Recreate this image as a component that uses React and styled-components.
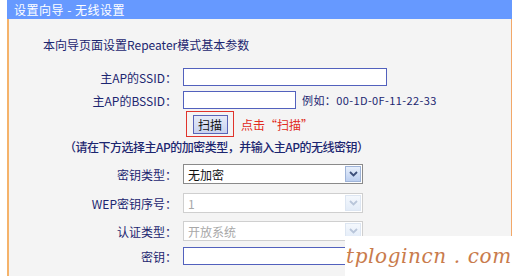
import React from 'react';
import styled, { createGlobalStyle } from 'styled-components';

const Global = createGlobalStyle`
  html, body { margin: 0; padding: 0; background: #fff; }
  body { width: 520px; height: 276px; overflow: hidden; font-family: "Noto Sans CJK SC", "DejaVu Sans", sans-serif; }
`;

const Page = styled.div`
  position: relative;
  padding-left: 7px;
  width: 513px;
  height: 276px;
`;

const Panel = styled.div`
  width: 505px;
`;

const TitleBar = styled.div`
  height: 19px;
  background: #6699ff;
  color: #fff;
  font-size: 12px;
  line-height: 19px;
  padding-left: 7px;
  letter-spacing: 0.5px;
`;

const Body = styled.div`
  background: #f4f4f4;
  border-left: 2px solid #f5b36b;
  border-right: 1px solid #f2a869;
  height: 257px;
  display: flex;
  flex-direction: column;
`;

const Intro = styled.div`
  margin-top: 19px;
  padding-left: 34px;
  font-size: 12px;
  line-height: 14px;
  color: #1c2670;
`;

const Row = styled.div`
  display: grid;
  grid-template-columns: 168px 1fr;
  column-gap: 6px;
  align-items: center;
  height: ${p => p.$h}px;
  margin-top: ${p => p.$mt}px;
`;

const Label = styled.div`
  text-align: right;
  font-size: 12px;
  color: #1c2670;
  white-space: nowrap;
`;

const Cell = styled.div`
  display: flex;
  align-items: center;
  gap: 6px;
  height: 100%;
`;

const TextInput = styled.div`
  box-sizing: border-box;
  width: ${p => p.$w}px;
  height: 18px;
  background: #fff;
  border: 1px solid #5261bd;
`;

const Hint = styled.span`
  font-size: 11px;
  color: #1c2670;
  white-space: nowrap;
  letter-spacing: 0.4px;
`;

const ScanBox = styled.div`
  box-sizing: border-box;
  margin-left: 3px;
  width: 48px;
  height: 26px;
  border: 1px solid #e0342c;
  display: flex;
  align-items: center;
  justify-content: center;
`;

const ScanButton = styled.div`
  box-sizing: border-box;
  width: 35px;
  height: 19px;
  border: 1px solid #5a64b8;
  background: linear-gradient(#e6ebf8, #c9d3ef);
  font-size: 12px;
  line-height: 17px;
  text-align: center;
  color: #111;
`;

const RedNote = styled.span`
  margin-left: 1px;
  font-size: 12px;
  color: #e12a22;
`;

const Note = styled.div`
  margin-top: 3px;
  padding-left: 55px;
  height: 14px;
  font-size: 12px;
  line-height: 14px;
  color: #1c2670;
  font-weight: 500;
  letter-spacing: -0.5px;
  white-space: nowrap;
`;

const Select = styled.div`
  box-sizing: border-box;
  width: 180px;
  height: 20px;
  background: #fff;
  border: 1px solid ${p => (p.$disabled ? '#cfcfcf' : '#8a8a8a')};
  display: flex;
  align-items: center;
  justify-content: space-between;
  padding-left: 4px;
  padding-right: 1px;
  font-size: 12px;
  color: ${p => (p.$disabled ? '#a8a8a8' : '#111')};
`;

const Arrow = styled.div`
  box-sizing: border-box;
  width: 16px;
  height: 16px;
  border: 1px solid ${p => (p.$disabled ? '#dde6f2' : '#9fb4d8')};
  background: ${p => (p.$disabled ? 'linear-gradient(#f4f8fd, #e3ecf8)' : 'linear-gradient(#e7effb, #bccff0)')};
  display: flex;
  align-items: center;
  justify-content: center;
`;

const Watermark = styled.div`
  position: absolute;
  left: 345px;
  top: 236px;
  width: 175px;
  height: 40px;
  background: #fff;
  color: #c97b4c;
  font-family: "DejaVu Serif", "Liberation Serif", serif;
  font-style: italic;
  font-size: 20px;
  line-height: 40px;
  padding-left: 1px;
  letter-spacing: 0.6px;
  box-sizing: border-box;
  white-space: nowrap;
  overflow: hidden;
`;

const Chevron = ({ disabled }) => (
  <svg width="9" height="6" viewBox="0 0 9 6">
    <path d="M1 1 L4.5 4.5 L8 1" fill="none" stroke={disabled ? '#b9c6da' : '#3d4f7a'} strokeWidth="1.8" />
  </svg>
);

const SelectBox = ({ value, disabled }) => (
  <Select $disabled={disabled}>
    <span>{value}</span>
    <Arrow $disabled={disabled}>
      <Chevron disabled={disabled} />
    </Arrow>
  </Select>
);

export default function App() {
  return (
    <Page>
      <Global />
      <Panel>
        <TitleBar>设置向导 - 无线设置</TitleBar>
        <Body>
          <Intro>本向导页面设置Repeater模式基本参数</Intro>
          <Row $h={18} $mt={16}>
            <Label>主AP的SSID：</Label>
            <Cell><TextInput $w={204} /></Cell>
          </Row>
          <Row $h={18} $mt={5}>
            <Label>主AP的BSSID：</Label>
            <Cell>
              <TextInput $w={113} />
              <Hint>例如：00-1D-0F-11-22-33</Hint>
            </Cell>
          </Row>
          <Row $h={26} $mt={2}>
            <Label />
            <Cell>
              <ScanBox><ScanButton>扫描</ScanButton></ScanBox>
              <RedNote>点击“扫描”</RedNote>
            </Cell>
          </Row>
          <Note>（请在下方选择主AP的加密类型，并输入主AP的无线密钥）</Note>
          <Row $h={20} $mt={10}>
            <Label>密钥类型：</Label>
            <Cell><SelectBox value="无加密" /></Cell>
          </Row>
          <Row $h={20} $mt={9}>
            <Label>WEP密钥序号：</Label>
            <Cell><SelectBox value="1" disabled /></Cell>
          </Row>
          <Row $h={20} $mt={8}>
            <Label>认证类型：</Label>
            <Cell><SelectBox value="开放系统" disabled /></Cell>
          </Row>
          <Row $h={18} $mt={6}>
            <Label>密钥：</Label>
            <Cell><TextInput $w={204} /></Cell>
          </Row>
        </Body>
      </Panel>
      <Watermark>tplogincn . com</Watermark>
    </Page>
  );
}
